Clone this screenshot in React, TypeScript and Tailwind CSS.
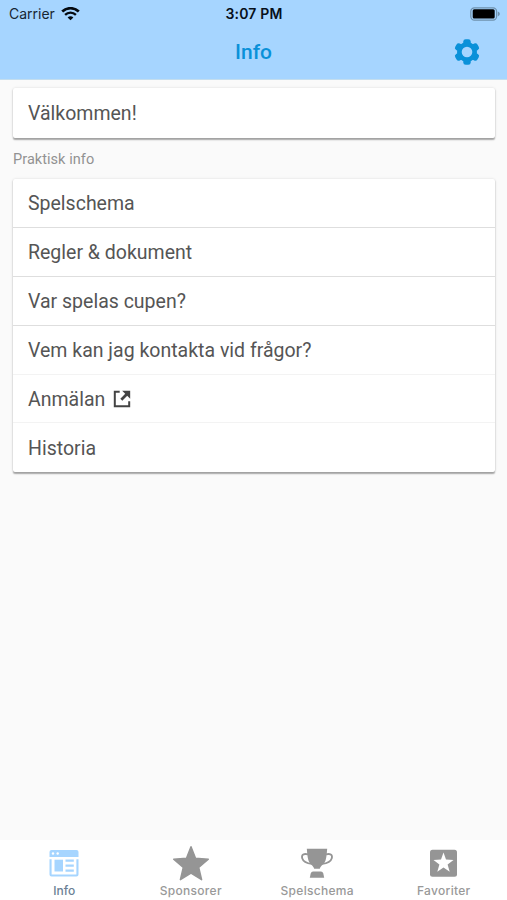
import React from "react";

function WifiIcon() {
  return (
    <svg className="ml-[6px] h-[14px] w-[19px]" viewBox="0 0 19 14" fill="none" stroke="#050a10">
      <path d="M1.2 4.6C5.9.1 13.1.1 17.8 4.6" strokeWidth="2.7" />
      <path d="M4.1 7.8C7.2 4.9 11.8 4.9 14.9 7.8" strokeWidth="2.4" />
      <path d="M6.6 10.4C8.3 8.8 10.7 8.8 12.4 10.4L9.5 13.2Z" fill="#050a10" stroke="none" />
    </svg>
  );
}

function BatteryIcon() {
  return (
    <svg className="h-[14px] w-[31px]" viewBox="0 0 31 14">
      <rect x=".8" y=".8" width="25.8" height="12.4" rx="3.6" fill="none" stroke="#6f91ad" strokeWidth="1.2" />
      <rect x="2.7" y="2.3" width="22" height="9.2" rx="1.5" fill="#000" />
      <path d="M27.8 4.6C30.5 5.6 30.5 8.4 27.8 9.4Z" fill="#6f91ad" />
    </svg>
  );
}

function GearIcon() {
  return (
    <svg className="h-[26px] w-[26px]" viewBox="0 0 26 26">
      <g fill="#0a91d9">
        <rect x="9.3" y=".2" width="7.4" height="25.6" rx="2.4" />
        <rect x="9.3" y=".2" width="7.4" height="25.6" rx="2.4" transform="rotate(60 13 13)" />
        <rect x="9.3" y=".2" width="7.4" height="25.6" rx="2.4" transform="rotate(120 13 13)" />
        <circle cx="13" cy="13" r="10" />
      </g>
      <circle cx="13" cy="13" r="5.3" fill="#a6d5ff" />
    </svg>
  );
}

function ExternalIcon() {
  return (
    <svg className="ml-[8px] h-[18px] w-[18px]" viewBox="0 0 18 18" fill="none" stroke="#444" strokeWidth="2">
      <path d="M6.7 1.8H1.8V16.2H16.2V11.3" />
      <path d="M8.3 9.7L14.5 3.5" strokeWidth="2.8" />
      <path d="M9.2.8H17.2V8.8Z" fill="#444" stroke="none" />
    </svg>
  );
}

function NewsIcon() {
  return (
    <svg className="h-[38px] w-[38px]" viewBox="0 0 38 38" fill="#a6d5ff">
      <path d="M6.5 6H31.5Q33.5 6 33.5 8V13H4.5V8Q4.5 6 6.5 6Z" />
      <circle cx="8" cy="9.5" r="1.2" fill="#fff" />
      <circle cx="12.7" cy="9.5" r="1.2" fill="#fff" />
      <path d="M4.5 15.3H6.6V30.4H31.4V15.3H33.5V30.5Q33.5 32.5 31.5 32.5H6.5Q4.5 32.5 4.5 30.5Z" />
      <path d="M9.5 15.7H18V27.5H9.5Z" />
      <path d="M20.5 15.5H28.8V17.7H20.5ZM20.5 20.5H28.8V22.7H20.5ZM20.5 25.5H28.8V27.7H20.5Z" />
    </svg>
  );
}

function StarIcon() {
  return (
    <svg className="h-[38px] w-[38px]" viewBox="0 0 38 38" fill="#959595" stroke="#959595" strokeWidth="1.5" strokeLinejoin="round">
      <path d="M19 2.8L23.5 14.3L36.3 15.2L26.7 23.4L29.6 35.7L19 29.1L8.4 35.7L11.3 23.4L1.7 15.2L14.5 14.3Z" />
    </svg>
  );
}

function TrophyIcon() {
  return (
    <svg className="h-[38px] w-[38px]" viewBox="0 0 38 38" fill="#959595">
      <path d="M8.8 4.7H29.2C28.8 8.3 28.8 12 27.6 16.2C26.5 20 22.8 21.3 21.8 24.7H16.2C15.2 21.3 11.5 20 10.4 16.2C9.2 12 9.2 8.3 8.8 4.7Z" />
      <path d="M10 10.4C6 9.2 3.2 10.8 4.2 14.2C5.2 17.6 9.6 19.4 13.8 19.8M28 10.4C32 9.2 34.8 10.8 33.8 14.2C32.8 17.6 28.4 19.4 24.2 19.8" fill="none" stroke="#959595" strokeWidth="1.8" />
      <path d="M15 27.5H23Q24.7 27.5 25.3 29.4L26.2 33.7H11.8L12.7 29.4Q13.3 27.5 15 27.5Z" />
    </svg>
  );
}

function FavoriteIcon() {
  return (
    <svg className="h-[38px] w-[38px]" viewBox="0 0 38 38">
      <rect x="5" y="5.8" width="27" height="27" rx="2.5" fill="#959595" />
      <path d="M18.5 8.6L21 15.6L28.5 15.9L22.6 20.4L24.7 27.8L18.5 23.5L12.3 27.8L14.4 20.4L8.5 15.9L16 15.6Z" fill="#fff" />
    </svg>
  );
}

const rows = [
  { label: "Spelschema", line: "border-[#dedede]" },
  { label: "Regler & dokument", line: "border-[#dedede]" },
  { label: "Var spelas cupen?", line: "border-[#dedede]" },
  { label: "Vem kan jag kontakta vid frågor?", line: "border-[#f3f3f3]" },
  { label: "Anmälan", line: "border-[#f3f3f3]", external: true },
  { label: "Historia", line: "border-transparent" },
];

const tabs = [
  { label: "Info", icon: <NewsIcon />, style: "text-[#6b7f95]" },
  { label: "Sponsorer", icon: <StarIcon />, style: "text-[#999] tracking-[0.3px]" },
  { label: "Spelschema", icon: <TrophyIcon />, style: "text-[#999] tracking-[0.3px]" },
  { label: "Favoriter", icon: <FavoriteIcon />, style: "text-[#999] tracking-[0.3px]" },
];

const cardShadow = "shadow-[0_1.5px_1.5px_rgba(0,0,0,0.33),0_0_3px_rgba(0,0,0,0.1)]";

export default function App() {
  return (
    <div className="flex h-[900px] w-[507px] flex-col overflow-hidden bg-[#fafafa] font-['Roboto',sans-serif]">
      <header className="h-[80px] shrink-0 border-b border-[#c4deee] bg-[#a6d5ff]">
        <div className="grid h-[27px] grid-cols-3 items-center font-['Inter',sans-serif]">
          <div className="flex items-center pl-[9px] text-[14px] text-[#182633]">
            <span>Carrier</span>
            <WifiIcon />
          </div>
          <div className="pl-px text-center text-[14px] font-semibold tracking-[0.15px] text-[#07101a]">3:07 PM</div>
          <div className="flex justify-end pr-[6px]"><BatteryIcon /></div>
        </div>
        <div className="grid h-[50px] grid-cols-3 items-center">
          <div />
          <h1 className="pt-px text-center text-[21px] font-medium text-[#0a91d9]">Info</h1>
          <div className="flex justify-end pr-[27px]"><GearIcon /></div>
        </div>
      </header>
      <main className="flex-1 pl-[13px] pr-[12px] pt-[8px]">
        <section className={`flex h-[49.5px] items-center rounded-[2px] bg-white pl-[15px] pt-[2px] text-[19.5px] text-[#555] ${cardShadow}`}>
          Välkommen!
        </section>
        <h2 className="flex h-[41.5px] items-center pt-[3px] text-[14.5px] tracking-[0.05px] text-[#929292]">Praktisk info</h2>
        <section className={`rounded-[2px] bg-white ${cardShadow}`}>
          {rows.map((row) => (
            <div key={row.label} className={`flex h-[48.9px] items-center border-b pl-[15px] pt-[1.5px] text-[19.5px] text-[#555] ${row.line}`}>
              <span>{row.label}</span>
              {row.external && <ExternalIcon />}
            </div>
          ))}
        </section>
      </main>
      <nav className="grid h-[60px] shrink-0 grid-cols-4 bg-white pl-px">
        {tabs.map((tab) => (
          <div key={tab.label} className={`flex flex-col items-center pt-[4px] font-['Inter',sans-serif] text-[12px] font-medium leading-[18px] ${tab.style}`}>
            {tab.icon}
            <span>{tab.label}</span>
          </div>
        ))}
      </nav>
    </div>
  );
}
